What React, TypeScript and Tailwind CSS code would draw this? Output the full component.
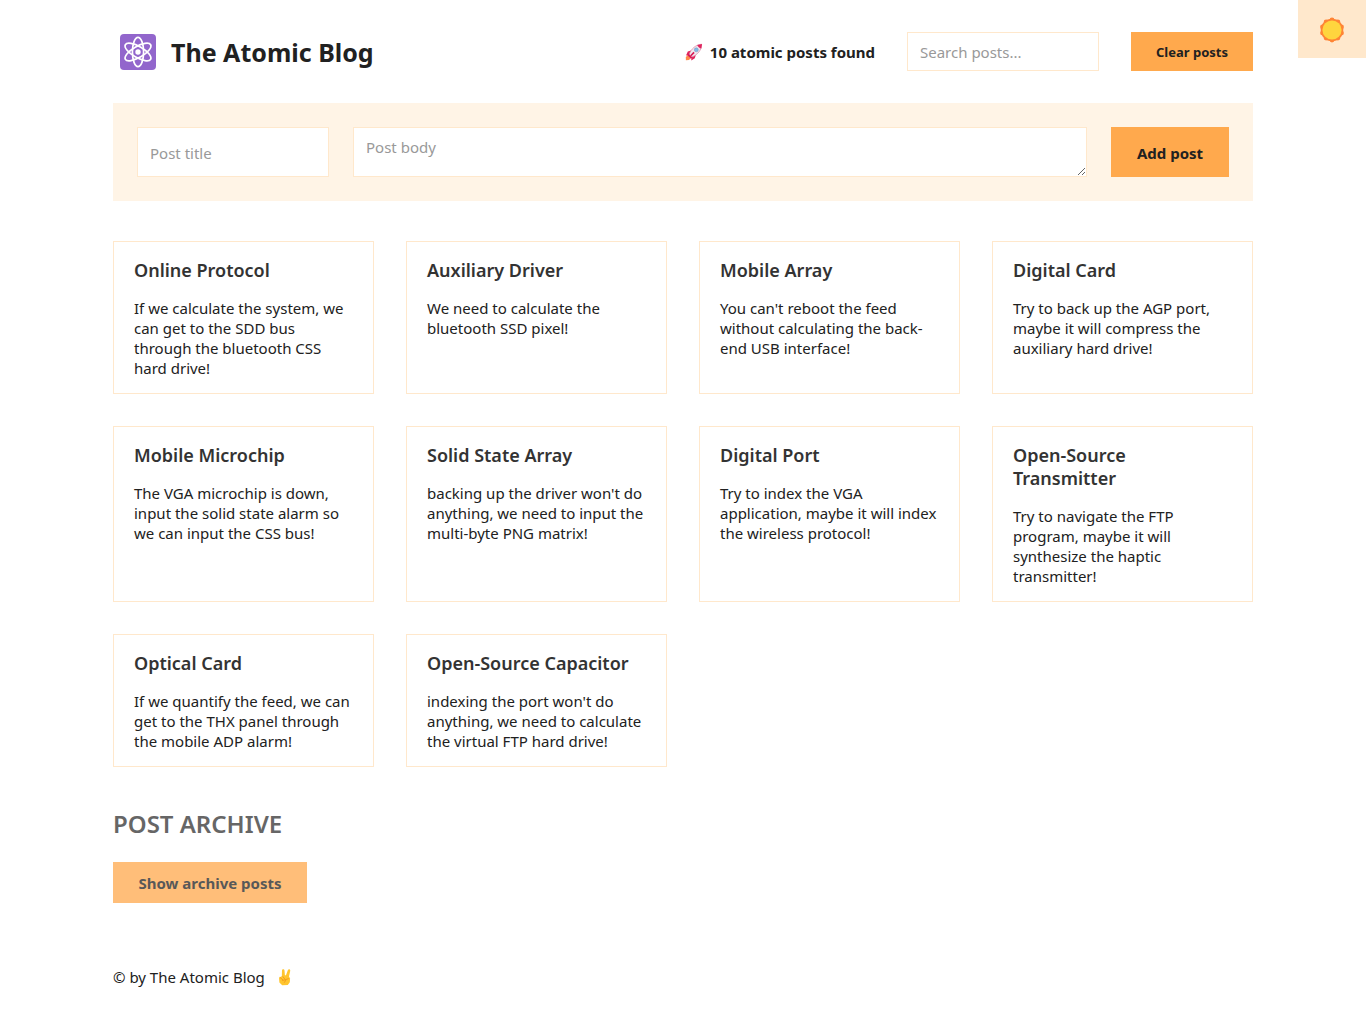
import { useState } from "react";

const initialPosts = [
  { title: "Online Protocol", body: "If we calculate the system, we can get to the SDD bus through the bluetooth CSS hard drive!" },
  { title: "Auxiliary Driver", body: "We need to calculate the bluetooth SSD pixel!" },
  { title: "Mobile Array", body: "You can't reboot the feed without calculating the back-end USB interface!" },
  { title: "Digital Card", body: "Try to back up the AGP port, maybe it will compress the auxiliary hard drive!" },
  { title: "Mobile Microchip", body: "The VGA microchip is down, input the solid state alarm so we can input the CSS bus!" },
  { title: "Solid State Array", body: "backing up the driver won't do anything, we need to input the multi-byte PNG matrix!" },
  { title: "Digital Port", body: "Try to index the VGA application, maybe it will index the wireless protocol!" },
  { title: "Open-Source Transmitter", body: "Try to navigate the FTP program, maybe it will synthesize the haptic transmitter!" },
  { title: "Optical Card", body: "If we quantify the feed, we can get to the THX panel through the mobile ADP alarm!" },
  { title: "Open-Source Capacitor", body: "indexing the port won't do anything, we need to calculate the virtual FTP hard drive!" },
];

function AtomIcon() {
  return (
    <svg viewBox="0 0 36 36" className="size-9 shrink-0" aria-hidden="true">
      <rect width="36" height="36" rx="4" fill="#9266cc" />
      <g fill="none" stroke="#fff" strokeWidth="1.7">
        <ellipse cx="18" cy="18" rx="5.6" ry="14.6" />
        <ellipse cx="18" cy="18" rx="5.6" ry="14.6" transform="rotate(60 18 18)" />
        <ellipse cx="18" cy="18" rx="5.6" ry="14.6" transform="rotate(120 18 18)" />
      </g>
      <circle cx="18" cy="18" r="2.7" fill="#fff" />
    </svg>
  );
}

function RocketIcon() {
  return (
    <svg viewBox="0 0 18 18" className="size-[18px] shrink-0" aria-hidden="true">
      <path d="M.9 17.2.8 14 3.2 11.8 6.3 14.8 4 17.1Z" fill="#ff8a4c" />
      <path d="M6 7.4 2.8 8.6 1 12.4 5 12ZM10.8 12 9.8 15.2 6.3 17.6 6.3 13.4Z" fill="#e0245e" />
      <path d="M4.2 11.5C6 6 10.5 1.8 16.6 1.2 16.8 7 12.3 12 6.8 14Z" fill="#f1e9f0" stroke="#d9829f" strokeWidth=".7" />
      <path d="M12.2 1.9 17 .9 16.3 5.6C14.3 5.1 12.8 3.8 12.2 1.9Z" fill="#e0245e" />
      <path d="M3.6 10.8 7.3 14.5 5.8 15.4 2.6 12.4ZM5.2 12.2 8.4 8.7 9.7 9.9 6.4 13.3Z" fill="#d81b55" />
      <circle cx="11.3" cy="6.8" r="2" fill="#82b9e8" stroke="#7095b5" strokeWidth=".5" />
    </svg>
  );
}

function SunIcon() {
  return (
    <svg viewBox="0 0 26 26" className="mt-0.5 size-[26px]" aria-hidden="true">
      <g fill="#ff8434">
        <circle cx="13" cy="13" r="11.3" />
        <circle cx="13" cy="3" r="2.4" />
        <circle cx="18.9" cy="4.9" r="2.4" />
        <circle cx="22.5" cy="9.9" r="2.4" />
        <circle cx="22.5" cy="16.1" r="2.4" />
        <circle cx="18.9" cy="21.1" r="2.4" />
        <circle cx="13" cy="23" r="2.4" />
        <circle cx="7.1" cy="21.1" r="2.4" />
        <circle cx="3.5" cy="16.1" r="2.4" />
        <circle cx="3.5" cy="9.9" r="2.4" />
        <circle cx="7.1" cy="4.9" r="2.4" />
      </g>
      <circle cx="13" cy="13" r="9.6" fill="#ffd53e" />
    </svg>
  );
}

function VictoryIcon() {
  return (
    <svg viewBox="0 0 16 18" className="h-[18px] w-4 shrink-0" aria-hidden="true">
      <path d="M2 9.4 4.8 8.2 5 2.6C5.1.9 7.4 1 7.5 2.6L7.9 7.3 9 7.3 10.9 2C11.5.6 13.6 1.1 13.2 2.9L12 8.4 13.1 10.6 12.8 14.3 10.8 17 5.2 17.2 2.4 14.4Z" fill="#ffc52f" />
      <path d="M3.2 9.6 5.8 11.8M5.9 8.6 7.9 11.2M5.6 12.5 11.4 10.7M8.8 12.2 7.4 14.4" fill="none" stroke="#f09a1c" strokeWidth=".9" strokeLinecap="round" />
    </svg>
  );
}

export default function App() {
  const [posts, setPosts] = useState(initialPosts);
  const [query, setQuery] = useState("");
  const [title, setTitle] = useState("");
  const [body, setBody] = useState("");
  const [archiveOpen, setArchiveOpen] = useState(false);
  const [dark, setDark] = useState(false);
  const shown = posts.filter((p) => (p.title + " " + p.body).toLowerCase().includes(query.toLowerCase()));

  return (
    <div className={dark ? "min-h-screen bg-white invert hue-rotate-180" : "min-h-screen bg-white"}>
      <button
        type="button"
        aria-label="Toggle dark mode"
        onClick={() => setDark(!dark)}
        className="absolute top-0 right-0 flex h-[58px] w-[68px] items-center justify-center bg-[#ffe8cc]"
      >
        <SunIcon />
      </button>
      <div className="mx-auto max-w-[1140px] font-['Segoe_UI','Noto_Sans',sans-serif] text-[15px] leading-5 text-[#212121]">
        <header className="flex items-center justify-between pt-8 pb-8">
          <h1 className="flex h-[39px] items-center gap-[15px] pl-[7px] text-[25px] font-bold">
            <AtomIcon />
            The Atomic Blog
          </h1>
          <div className="flex items-center gap-8">
            <p className="flex items-center gap-[7px] font-bold">
              <RocketIcon />
              {shown.length} atomic posts found
            </p>
            <input
              type="search"
              aria-label="Search posts"
              placeholder="Search posts..."
              value={query}
              onChange={(e) => setQuery(e.target.value)}
              className="h-[39px] w-48 border border-[#ffe8cc] bg-white px-3 placeholder:text-[#999]"
            />
            <button type="button" onClick={() => setPosts([])} className="h-[39px] w-[122px] bg-[#ffa94d] text-[13px] font-bold">
              Clear posts
            </button>
          </div>
        </header>

        <form
          onSubmit={(e) => {
            e.preventDefault();
            if (!title || !body) return;
            setPosts([{ title, body }, ...posts]);
            setTitle("");
            setBody("");
          }}
          className="flex gap-6 bg-[#fff4e6] p-6"
        >
          <input
            aria-label="Post title"
            placeholder="Post title"
            value={title}
            onChange={(e) => setTitle(e.target.value)}
            className="w-48 border border-[#ffe8cc] bg-white px-3 pt-0.5 placeholder:text-[#999]"
          />
          <textarea
            aria-label="Post body"
            placeholder="Post body"
            value={body}
            onChange={(e) => setBody(e.target.value)}
            className="h-[50px] flex-1 border border-[#ffe8cc] bg-white px-3 py-[9px] placeholder:text-[#999]"
          />
          <button className="w-[118px] bg-[#ffa94d] pt-0.5 font-bold">Add post</button>
        </form>

        <main>
          <ul className="mt-10 grid grid-cols-4 gap-8">
            {shown.map((post) => (
              <li key={post.title} className="border border-[#ffe8cc] px-5 pt-[17px] pb-[15px]">
                <h2 className="mb-4 text-lg leading-[23px] font-semibold text-[#333]">{post.title}</h2>
                <p>{post.body}</p>
              </li>
            ))}
          </ul>
        </main>

        <aside className="mt-10 opacity-75">
          <h2 className="mb-[21px] text-2xl leading-[34px] font-semibold text-[#333] uppercase">Post archive</h2>
          <button type="button" onClick={() => setArchiveOpen(!archiveOpen)} className="h-[41px] w-[194px] bg-[#ffa94d] font-bold">
            {archiveOpen ? "Hide archive posts" : "Show archive posts"}
          </button>
        </aside>

        <footer className="mt-16 flex items-center gap-3 pb-8">
          <p>© by The Atomic Blog</p>
          <VictoryIcon />
        </footer>
      </div>
    </div>
  );
}
